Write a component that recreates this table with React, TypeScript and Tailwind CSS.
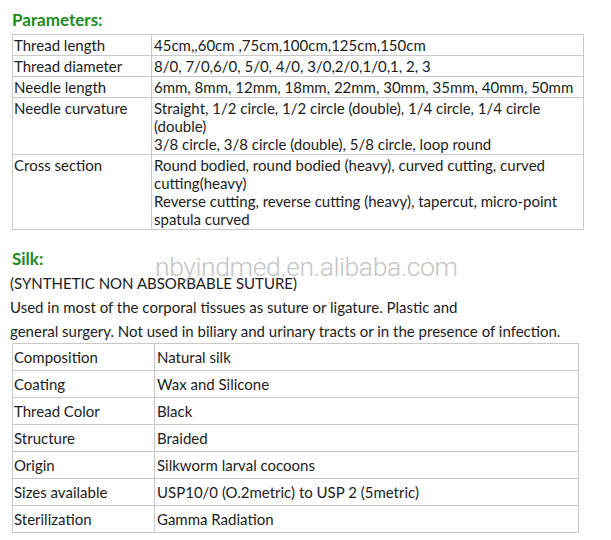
import React from "react";

const params: [string, string[]][] = [
  ["Thread length", ["45cm,,60cm ,75cm,100cm,125cm,150cm"]],
  ["Thread diameter", ["8/0, 7/0,6/0, 5/0, 4/0, 3/0,2/0,1/0,1, 2, 3"]],
  ["Needle length", ["6mm, 8mm, 12mm, 18mm, 22mm, 30mm, 35mm, 40mm, 50mm"]],
  [
    "Needle curvature",
    [
      "Straight, 1/2 circle, 1/2 circle (double), 1/4 circle, 1/4 circle (double)",
      "3/8 circle, 3/8 circle (double), 5/8 circle, loop round",
    ],
  ],
  [
    "Cross section",
    [
      "Round bodied, round bodied (heavy), curved cutting, curved cutting(heavy)",
      "Reverse cutting, reverse cutting (heavy), tapercut, micro-point spatula curved",
    ],
  ],
];

const silk: [string, string][] = [
  ["Composition", "Natural silk"],
  ["Coating", "Wax and Silicone"],
  ["Thread Color", "Black"],
  ["Structure", "Braided"],
  ["Origin", "Silkworm larval cocoons"],
  ["Sizes available", "USP10/0 (O.2metric) to USP 2 (5metric)"],
  ["Sterilization", "Gamma Radiation"],
];

export default function App() {
  return (
    <div className="relative w-[611px] h-[540px] bg-white text-[#1c1c1c] text-[15px] leading-[18px] font-['Lato',sans-serif] overflow-hidden">
      <div className="pl-[12px] pt-[10px]">
        <h2 className="text-[#1f8a1f] font-bold text-[17px] leading-[20px] h-[24px]">Parameters:</h2>
        <table className="border-collapse w-[572px] table-fixed">
          <colgroup>
            <col className="w-[139px]" />
            <col />
          </colgroup>
          <tbody>
            {params.map(([k, v]) => (
              <tr key={k}>
                <td className="border border-[#c9c9c9] align-top pl-[1px] pt-[1px] pb-[1px]">{k}</td>
                <td className="border border-[#c9c9c9] align-top pl-[2px] pr-[8px] pt-[1px] pb-[1px]">
                  {v.map((line) => (
                    <div key={line}>{line}</div>
                  ))}
                </td>
              </tr>
            ))}
          </tbody>
        </table>
      </div>

      <div className="pl-[10px] pt-[19px]">
        <h2 className="text-[#1f8a1f] font-bold text-[17px] leading-[20px] h-[22px] pl-[2px]">Silk:</h2>
        <p className="leading-[24px]">(SYNTHETIC NON ABSORBABLE SUTURE)</p>
        <p className="leading-[24px]">Used in most of the corporal tissues as suture or ligature. Plastic and</p>
        <p className="leading-[24px]">general surgery. Not used in biliary and urinary tracts or in the presence of infection.</p>
        <table className="border-collapse w-[567px] table-fixed ml-[2px]">
          <colgroup>
            <col className="w-[142px]" />
            <col />
          </colgroup>
          <tbody>
            {silk.map(([k, v]) => (
              <tr key={k} className="h-[27px]">
                <td className="border border-[#c9c9c9] align-middle pl-[1px]">{k}</td>
                <td className="border border-[#c9c9c9] align-middle pl-[2px]">{v}</td>
              </tr>
            ))}
          </tbody>
        </table>
      </div>

      <div className="absolute left-[155px] top-[252px] text-[26.5px] leading-[30px] font-['Roboto',sans-serif] font-light text-[#b4b4b4]/80 tracking-[-0.4px]">
        nbyindmed.en.alibaba.com
      </div>
    </div>
  );
}
